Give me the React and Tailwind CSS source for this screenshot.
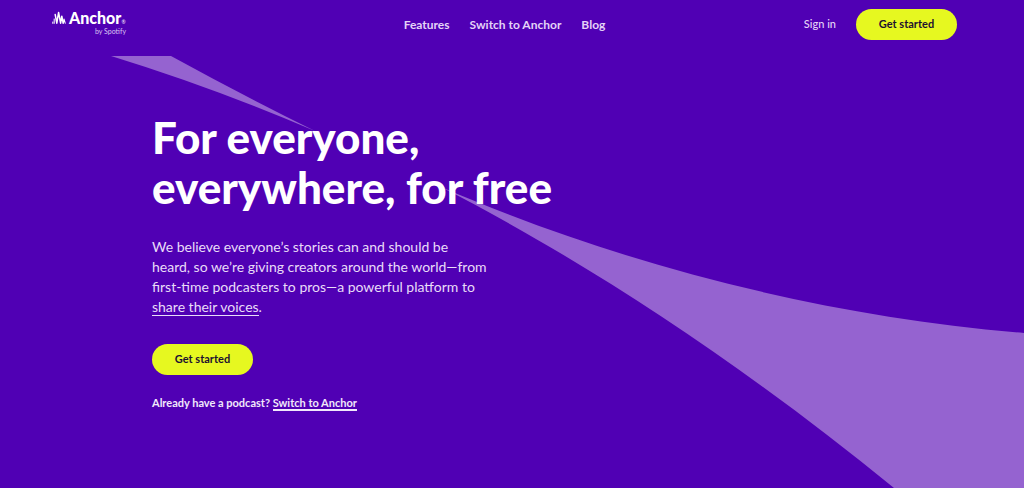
function Logo() {
  return (
    <a href="#home" aria-label="Anchor by Spotify" className="flex w-[74px] flex-col text-white">
      <span className="flex items-center gap-[3px]">
        <svg viewBox="0 0 14 14" className="h-[14px] w-[14px] shrink-0" fill="none" stroke="currentColor" strokeLinecap="round" strokeLinejoin="round" aria-hidden="true">
          <path strokeWidth="1" d="M0.8 11V12.4M2.2 8V12.4" />
          <path strokeWidth="1.5" d="M3.2 3.6L4.8 12.2L6.6 1.4L8.6 12.2L9.8 5.2L11.2 12.2" />
          <path strokeWidth="1.1" d="M11.2 12L12 8L13.2 12.2" />
        </svg>
        <span className="flex items-end text-[16px] leading-[18px] font-black">
          Anchor<span className="text-[5px] leading-[10px] font-normal">®</span>
        </span>
      </span>
      <span className="self-end text-[7px] leading-[8px] text-[#d9c4f2]">by Spotify</span>
    </a>
  );
}

function GetStarted() {
  return (
    <button type="button" className="h-[31px] w-[101px] rounded-full bg-[#e6f820] text-[11px] font-bold text-[#1c1030]">
      Get started
    </button>
  );
}

function Ribbon() {
  return (
    <svg viewBox="0 56 1024 432" className="absolute top-0 left-0 w-full" fill="#9563d0" aria-hidden="true">
      <path d="M111 56H171Q242 95 315 131Q212 87 111 56Z" />
      <path d="M441 187C620 264 820 316 1024 333V488H894C740 362 580 258 441 187Z" />
    </svg>
  );
}

export default function App() {
  return (
    <div className="flex min-h-screen flex-col bg-[#5000b4] font-['Lato',sans-serif] text-white">
      <header className="grid h-14 grid-cols-[1fr_auto_1fr] items-start pr-[67px] pl-[52px]">
        <div className="pt-[9px]">
          <Logo />
        </div>
        <nav aria-label="Main" className="flex gap-5 pt-4 text-[12px] leading-[18px] font-bold text-[#e4d3f7]">
          <a href="#features">Features</a>
          <a href="#switch">Switch to Anchor</a>
          <a href="#blog">Blog</a>
        </nav>
        <div className="flex items-center justify-end gap-5 pt-[9px]">
          <a href="#sign-in" className="text-[11px] font-medium text-[#e4d3f7]">Sign in</a>
          <GetStarted />
        </div>
      </header>
      <main className="relative grow overflow-hidden">
        <Ribbon />
        <section className="relative flex flex-col items-start pt-14 pl-[152px]">
          <h1 className="text-[44px] leading-[50px] font-black">
            For everyone,
            <br />
            everywhere, for free
          </h1>
          <p className="mt-[25px] text-[14px] leading-5 text-[#e9dcf8]">
            We believe everyone’s stories can and should be
            <br />
            heard, so we’re giving creators around the world—from
            <br />
            first-time podcasters to pros—a powerful platform to
            <br />
            <a href="#voices" className="border-b border-current">share their voices</a>.
          </p>
          <div className="mt-[27px]">
            <GetStarted />
          </div>
          <p className="mt-5 text-[11px] leading-4 font-bold text-[#f1e8fb]">
            Already have a podcast?{" "}
            <a href="#switch" className="border-b-2 border-current">Switch to Anchor</a>
          </p>
        </section>
      </main>
    </div>
  );
}
